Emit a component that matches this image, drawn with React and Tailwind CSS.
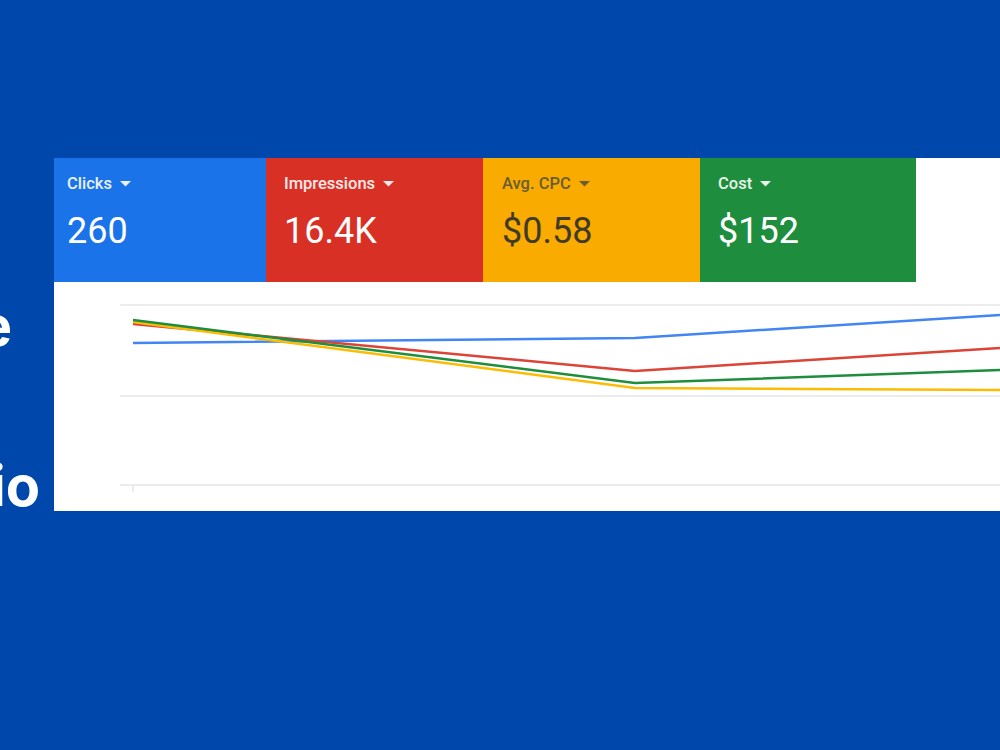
import React from "react";

const metrics = [
    { label: "Clicks", value: "260", bg: "bg-[#1a73e8]", w: "w-[212px]", pl: "pl-[13px]", text: "text-white", sub: "text-white/90" },
    { label: "Impressions", value: "16.4K", bg: "bg-[#d93025]", w: "w-[217px]", pl: "pl-[18px]", text: "text-white", sub: "text-white/90" },
    { label: "Avg. CPC", value: "$0.58", bg: "bg-[#f9ab00]", w: "w-[217px]", pl: "pl-[19px]", text: "text-[#3f3a2c]", sub: "text-[#6b5d33]" },
    { label: "Cost", value: "$152", bg: "bg-[#1e8e3e]", w: "w-[216px]", pl: "pl-[18px]", text: "text-white", sub: "text-white/90" },
];

// chart points in panel pixels (x, y)
const series = [
    { color: "#4285f4", pts: [[79, 61], [581, 56], [946, 33]] },
    { color: "#db4437", pts: [[79, 42], [581, 89], [946, 66]] },
    { color: "#fbbc04", pts: [[79, 40], [581, 106], [946, 108]] },
    { color: "#1e8e3e", pts: [[79, 38], [581, 101], [946, 88]] },
];

const MetricCard = ({ m }) => (
    <div className={`${m.bg} ${m.w} ${m.pl} h-full pt-[16px] flex flex-col gap-[17px]`}>
        <div className={`${m.sub} flex items-center gap-[8px] text-[16.5px] leading-[20px] font-medium`}>
            <span>{m.label}</span>
            <svg width="11" height="6" viewBox="0 0 11 6">
                <path d="M0 0 L11 0 L5.5 5.5 Z" fill="currentColor" />
            </svg>
        </div>
        <div className={`${m.text} text-[36px] leading-[40px]`}>{m.value}</div>
    </div>
);

const Chart = () => (
    <svg width="946" height="229" viewBox="0 0 946 229" className="block">
        {[23, 114, 203].map((y) => (
            <line key={y} x1="66" x2="946" y1={y} y2={y} stroke="#e6e6e6" strokeWidth="1.5" />
        ))}
        <line x1="79" x2="79" y1="203" y2="210" stroke="#e6e6e6" strokeWidth="1.5" />
        {series.map((s) => (
            <polyline
                key={s.color}
                points={s.pts.map((p) => p.join(",")).join(" ")}
                fill="none"
                stroke={s.color}
                strokeWidth="2.5"
                strokeLinejoin="round"
            />
        ))}
    </svg>
);

const App = () => {
    return (
        <div className="w-full h-[750px] bg-[#0047ab] overflow-hidden pt-[158px]">
            <div className="flex h-[353px]">
                {/* heading, mostly covered by the report panel */}
                <div className="w-[54px] shrink-0 overflow-hidden flex flex-col items-end pt-[128px] font-['Inter',sans-serif] font-bold text-white text-[56px] leading-[80px]">
                    <div className="whitespace-nowrap mr-[42px]">Google</div>
                    <div className="whitespace-nowrap mr-[70px]">Ads Report</div>
                    <div className="whitespace-nowrap mr-[14px]">Looker Studio</div>
                </div>

                {/* report panel */}
                <div className="flex-1 bg-white flex flex-col font-['Roboto',sans-serif]">
                    <div className="flex h-[124px]">
                        {metrics.map((m) => (
                            <MetricCard key={m.label} m={m} />
                        ))}
                    </div>
                    <Chart />
                </div>
            </div>
        </div>
    );
};

export default App;
